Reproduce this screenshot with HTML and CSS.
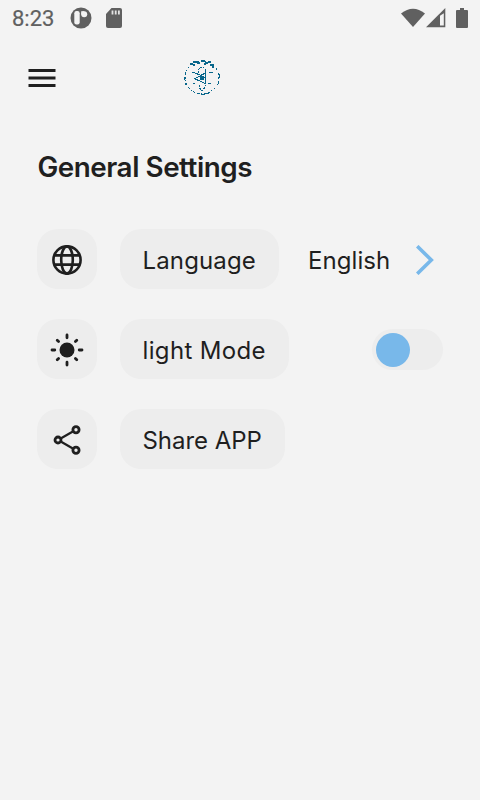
FILE: index.html
```
<!DOCTYPE html>
<html lang="en">
<head>
<meta charset="utf-8">
<title>General Settings</title>
<link rel="stylesheet" href="styles.css">
</head>
<body>
<header class="status">
  <span class="clock">8:23</span>
  <svg class="status-app" width="22" height="22" viewBox="0 0 22 22"><circle cx="11" cy="11" r="10.5" fill="#606060"/><rect x="4.3" y="4" width="5.4" height="13.5" rx="2.2" fill="#f3f3f3"/><circle cx="14.2" cy="7.2" r="3" fill="#f3f3f3"/><path d="M11.2 4.2h3v3h-3z" fill="#f3f3f3"/></svg>
  <svg class="status-card" width="16" height="20" viewBox="0 0 16 20"><path d="M5.5 0H14a2 2 0 0 1 2 2v16a2 2 0 0 1-2 2H2a2 2 0 0 1-2-2V6z" fill="#606060"/><path d="M6.5 2.5v4M9.7 2.5v4M12.9 2.5v4" stroke="#e3e3e3" stroke-width="1.8"/></svg>
  <span class="spacer"></span>
  <svg class="wifi" width="24" height="20" viewBox="0 0 24 20"><path d="M0 5.5Q12-4 24 5.5L12 19z" fill="#606060"/></svg>
  <svg class="signal" width="20" height="20" viewBox="0 0 20 20"><path d="M19.3 0v19.2H0z" fill="#606060"/><path d="M14 7.8l3.8-2.5v12.3H14z" fill="#f3f3f3"/></svg>
  <svg class="battery" width="12" height="20" viewBox="0 0 12 20"><path d="M4 0h4v2h3q1 0 1 1v16q0 1-1 1H1q-1 0-1-1V3q0-1 1-1h3z" fill="#606060"/></svg>
</header>
<nav class="bar">
  <svg class="menu" width="28" height="20" viewBox="0 0 28 20"><path d="M.5 2.5h27M.5 10h27M.5 17.5h27" stroke="#1f1f1f" stroke-width="3"/></svg>
  <svg class="logo" width="38" height="38" viewBox="0 0 38 38" fill="none" stroke="#07668b" shape-rendering="crispEdges">
    <ellipse cx="19" cy="18.5" rx="17" ry="16.3" stroke-dasharray="2 2 1 1.5 2 2.5"/>
    <path d="M7 5h3M10 3h4M14 4h3M18 2h4M22 4h3M25 3h3M27 6h4M29 8h2M10 6h2M21 5h2" stroke-width="1.4"/>
    <path d="M1 18v3M2 24v2M36 15v4M35 22v3M14 34h3M18 35h4M23 34h3"/>
    <path d="M9 13.5h3M26 13.5h4M25 24.5h3M10 24.5h2"/>
    <path d="M12 14l5 2 5 3M11 20l6-3 5-3M22.500 12v13M12 20l5 2 6 3" stroke-width="1.2"/>
    <path d="M15.500 14v-3l2-3h3l2 3v3M16 26v2l2 3h2l2-3v-2" stroke-dasharray="2 1"/>
    <path d="M17 17h3v3h-3z" fill="#07668b"/>
  </svg>
</nav>
<main>
  <h1><span>General Settings</span></h1>
  <section class="row">
    <div class="tile"><svg width="32" height="32" viewBox="0 0 32 32" fill="none" stroke="#1f1f1f" stroke-width="2.6"><circle cx="16" cy="16" r="13.6"/><ellipse cx="16" cy="16" rx="5.8" ry="13.6"/><path d="M3.2 11.4h25.6M3.2 20.6h25.6"/></svg></div>
    <div class="pill language"><span>Language</span></div>
    <span class="value">English</span>
    <svg class="chevron" width="18" height="30" viewBox="0 0 18 30"><path d="M1.200 1.200L15.300 15 1.200 28.800" fill="none" stroke="#78b8ea" stroke-width="3.6"/></svg>
  </section>
  <section class="row">
    <div class="tile"><svg width="34" height="34" viewBox="0 0 34 34" stroke="#1f1f1f" stroke-width="2.8" stroke-linecap="round"><circle cx="17" cy="17" r="7.5" fill="#1f1f1f" stroke="none"/><path d="M17 2v2.8M17 29.2V32M2 17h2.800M29.200 17H32M7.200 7.200l1.400 1.400M25.400 25.400l1.400 1.400M7.200 26.800l1.400-1.400M25.400 8.600l1.400-1.400"/></svg></div>
    <div class="pill mode"><span>light Mode</span></div>
    <div class="switch"><i></i></div>
  </section>
  <section class="row">
    <div class="tile"><svg width="32" height="32" viewBox="0 0 32 32" fill="none" stroke="#1f1f1f" stroke-width="2.8"><circle cx="7" cy="16" r="3"/><circle cx="25" cy="5.700" r="3.100"/><circle cx="25" cy="26.300" r="3.100"/><path d="M9.700 14.500l12.600-7.200M9.700 17.500l12.600 7.200" stroke-width="2.2"/></svg></div>
    <div class="pill share"><span>Share APP</span></div>
  </section>
</main>
</body>
</html>
```
FILE: styles.css
```
* { box-sizing: border-box; }
body { margin: 0; height: 800px; background: #f3f3f3; color: #1f1f1f; font-family: Inter, "Liberation Sans", sans-serif; }
svg { display: block; flex: none; }
.status { display: flex; align-items: center; height: 36px; padding: 0 12px; }
.clock { width: 58px; padding-top: 2px; font: 400 22px/26px Roboto, sans-serif; -webkit-text-stroke: 0.2px #606060; color: #606060; }
.status-card { margin-left: 14px; }
.spacer { flex: 1; }
.signal { margin-left: 1px; }
.battery { margin-left: 10px; }
.wifi, .signal, .battery { margin-top: -1px; }
.bar { display: flex; align-items: center; height: 83px; padding-left: 28px; }
.logo { margin-left: 126.5px; }
main { padding: 27px 37px 0 37.4px; }
h1 { margin: 0 0 41px; height: 42px; font-size: 27.8px; line-height: 42px; font-weight: 600; letter-spacing: -0.45px; white-space: nowrap; }
.row { display: flex; align-items: center; height: 60px; margin-bottom: 30px; }
.row { position: relative; }
.tile { display: flex; align-items: center; justify-content: center; flex: none; width: 60px; height: 60px; padding-top: 2px; border-radius: 21px; background: #ededed; }
.pill { display: flex; align-items: center; flex: none; height: 60px; margin-left: 22.5px; padding: 2px 0 0 22.6px; border-radius: 21px; background: #ededed; font-size: 24px; white-space: nowrap; }
.language { width: 159px; letter-spacing: 0.15px; }
.mode { width: 169.5px; letter-spacing: 0.35px; }
.share { width: 165px; letter-spacing: -0.05px; }
.value { width: 108px; margin-left: 29px; padding-top: 2px; font-size: 24px; letter-spacing: 0.1px; }
.chevron { flex: none; margin-top: 2px; }
.switch { width: 71px; height: 41px; margin: 1px 0 0 auto; padding: 3.5px; border-radius: 21px; background: #ededed; }
.switch i { display: block; width: 34px; height: 34px; border-radius: 50%; background: #78b8ea; }
```
